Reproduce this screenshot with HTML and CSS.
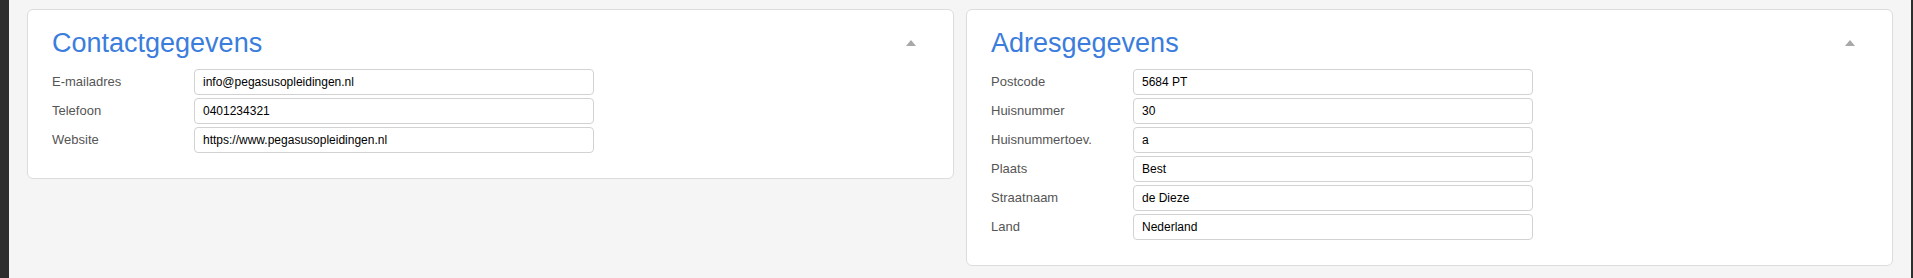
FILE: index.html
```html
<!DOCTYPE html>
<html lang="nl">
<head>
    <meta charset="UTF-8">
    <meta name="viewport" content="width=device-width, initial-scale=1.0">
    <title>Gegevens</title>
    <link rel="stylesheet" href="styles.css">
</head>
<body>

<div class="page">
    <div class="panel">
        <div class="panel-header">
            <h2>Contactgegevens</h2>
            <span class="toggle"></span>
        </div>
        <div class="field">
            <label for="email">E-mailadres</label>
            <input type="text" id="email" value="info@pegasusopleidingen.nl">
        </div>
        <div class="field">
            <label for="phone">Telefoon</label>
            <input type="text" id="phone" value="0401234321">
        </div>
        <div class="field">
            <label for="website">Website</label>
            <input type="text" id="website" value="https://www.pegasusopleidingen.nl">
        </div>
    </div>

    <div class="panel">
        <div class="panel-header">
            <h2>Adresgegevens</h2>
            <span class="toggle"></span>
        </div>
        <div class="field">
            <label for="postcode">Postcode</label>
            <input type="text" id="postcode" value="5684 PT">
        </div>
        <div class="field">
            <label for="number">Huisnummer</label>
            <input type="text" id="number" value="30">
        </div>
        <div class="field">
            <label for="suffix">Huisnummertoev.</label>
            <input type="text" id="suffix" value="a">
        </div>
        <div class="field">
            <label for="city">Plaats</label>
            <input type="text" id="city" value="Best">
        </div>
        <div class="field">
            <label for="street">Straatnaam</label>
            <input type="text" id="street" value="de Dieze">
        </div>
        <div class="field">
            <label for="country">Land</label>
            <input type="text" id="country" value="Nederland">
        </div>
    </div>

    <div class="panel"></div>
</div>

</body>
</html>
```

FILE: styles.css
```css
body {
    margin: 0;
    font-family: "Liberation Sans", Arial, sans-serif;
    background-color: #f5f5f5;
}
.page {
    display: grid;
    grid-template-columns: 1fr 1fr;
    align-items: start;
    column-gap: 12px;
    row-gap: 9px;
    padding: 9px 18px 0 18px;
    min-height: 400px;
    border-left: 9px solid #2e2e2e;
    border-right: 2px solid #2e2e2e;
}
.panel {
    background-color: #fff;
    border: 1px solid #dcdcdc;
    border-radius: 6px;
    padding: 18px 24px 25px 24px;
    min-height: 40px;
}
.panel-header {
    display: flex;
    align-items: center;
    justify-content: space-between;
    margin-bottom: 11px;
}
.panel-header h2 {
    margin: 0;
    font-size: 27px;
    line-height: 30px;
    font-weight: normal;
    color: #3b7ddc;
}
.toggle {
    width: 0;
    height: 0;
    margin-right: 13px;
    border-left: 5px solid transparent;
    border-right: 5px solid transparent;
    border-bottom: 6px solid #a8a8a8;
}
.field {
    display: flex;
    align-items: center;
    margin-bottom: 3px;
}
.field:last-child {
    margin-bottom: 0;
}
.field label {
    width: 142px;
    font-size: 13px;
    line-height: 26px;
    color: #555;
}
.field input {
    box-sizing: border-box;
    width: 400px;
    height: 26px;
    padding: 0 8px;
    font-family: "Liberation Sans", Arial, sans-serif;
    font-size: 12px;
    color: #000;
    border: 1px solid #d2d2d2;
    border-radius: 4px;
    outline: none;
}
```
